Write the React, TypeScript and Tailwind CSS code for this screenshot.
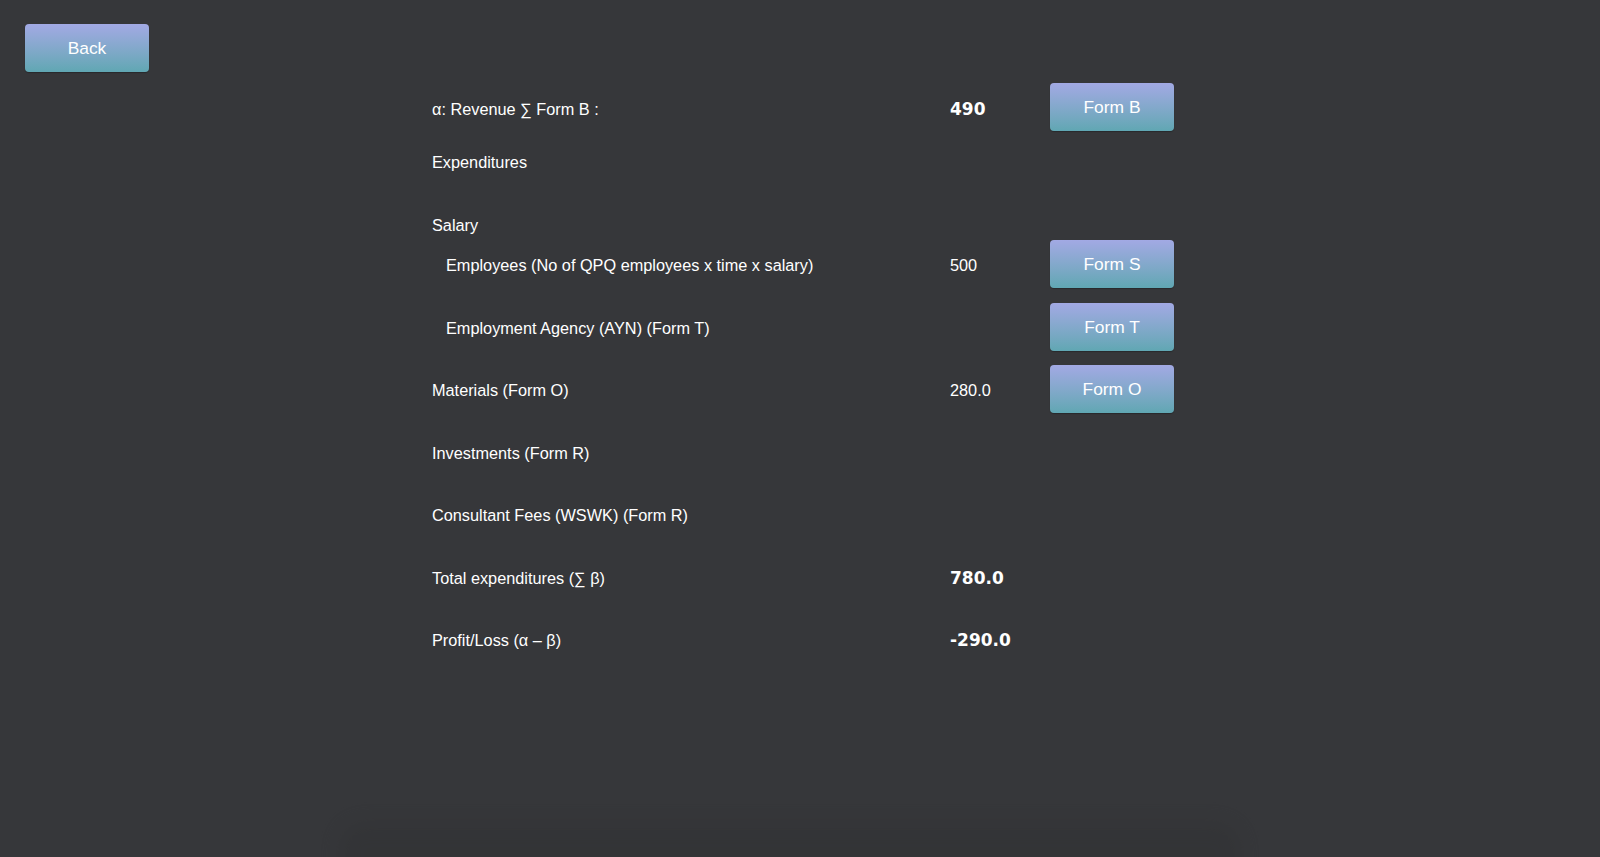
import React from "react";

const btn =
  "flex items-center justify-center w-[124px] h-[48px] pt-[1px] rounded-[4px] bg-gradient-to-b from-[#a2a9e4] to-[#60a7b3] text-white text-[17.4px] shadow-[0_1px_1px_rgba(0,0,0,0.25)] font-['Liberation_Sans',Arial,sans-serif]";

function Row({
  label,
  value,
  bold,
  button,
  indent,
  className,
}: {
  label: string;
  value?: string;
  bold?: boolean;
  button?: string;
  indent?: boolean;
  className?: string;
}) {
  return (
    <div className={"flex items-center h-[48px] " + (className ?? "")}>
      <div className={"w-[518px] pt-[3.5px] " + (indent ? "pl-[14px]" : "")}>{label}</div>
      <div
        className={
          "w-[100px] " +
          (bold ? "pt-[5px] font-['DejaVu_Sans',Verdana,sans-serif] font-bold text-[17px]" : "pt-[3.5px]")
        }
      >
        {value}
      </div>
      {button ? <div className={btn}>{button}</div> : null}
    </div>
  );
}

export default function App() {
  return (
    <div className="relative min-h-[857px] w-full bg-[#36373a] text-white text-[16.3px] font-['Liberation_Sans',Arial,sans-serif] overflow-hidden">
      <div className="pt-[24px] pl-[25px]">
        <div className={btn + " w-[123px]"}>Back</div>
      </div>
      <div className="ml-[432px] mt-[11px] flex flex-col">
        <Row label="α: Revenue ∑ Form B :" value="490" bold button="Form B" />
        <Row label="Expenditures" className="mt-[5.5px]" />
        <div className="flex items-center h-[32px] mt-[23px] pt-[3px]">Salary</div>
        <Row label="Employees (No of QPQ employees x time x salary)" value="500" button="Form S" indent />
        <Row label="Employment Agency (AYN) (Form T)" button="Form T" indent className="mt-[15px]" />
        <Row label="Materials (Form O)" value="280.0" button="Form O" className="mt-[14px]" />
        <Row label="Investments (Form R)" className="mt-[14.5px]" />
        <Row label="Consultant Fees (WSWK) (Form R)" className="mt-[14.5px]" />
        <Row label="Total expenditures (∑ β)" value="780.0" bold className="mt-[14.5px]" />
        <Row label="Profit/Loss (α – β)" value="-290.0" bold className="mt-[14.5px]" />
      </div>
      <div className="absolute left-[340px] right-[360px] bottom-[-30px] h-[64px] rounded-[24px] bg-[#2f3032] opacity-40 blur-[10px]" />
    </div>
  );
}
